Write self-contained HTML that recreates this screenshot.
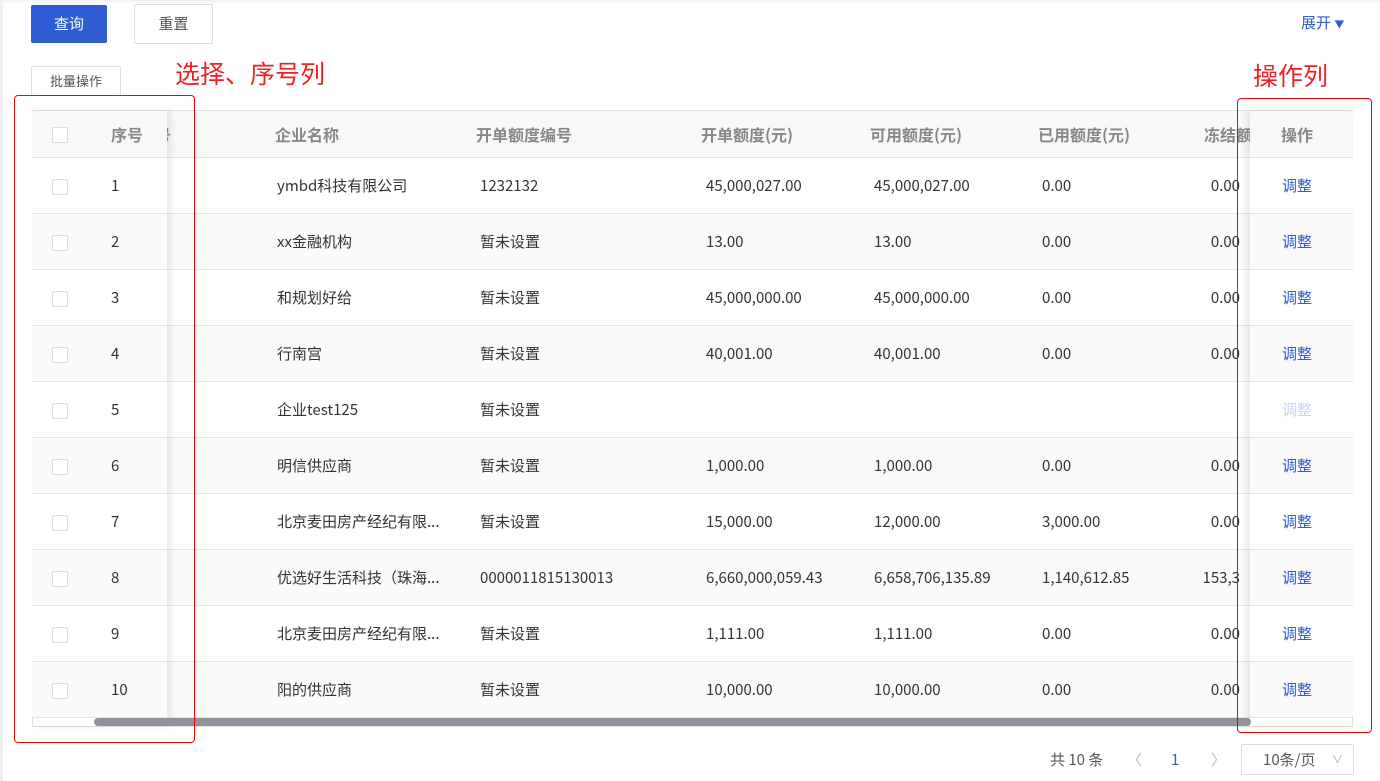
<!DOCTYPE html>
<html><head><meta charset="utf-8"><style>
*{margin:0;padding:0;box-sizing:border-box}
body{width:1380px;height:781px;background:#fff;font-family:"Noto Sans CJK SC","Liberation Sans",sans-serif;font-size:15px;color:#333;position:relative;overflow:hidden}
.a{position:absolute;white-space:nowrap;line-height:20px}
.btn{position:absolute;border:1px solid #dcdcdc;border-radius:2px;background:#fff;text-align:center;color:#555}
.row{position:absolute;left:32px;width:1321px;height:56px;border-bottom:1px solid #e5e5e5}
.cb{position:absolute;width:16px;height:16px;border:1px solid #dcdcdc;border-radius:2px;background:#fff}
.hd{color:#888;font-weight:bold;font-size:16px}
.red{border:1px solid #f00;border-radius:4px;position:absolute}
</style></head><body>
<div class="a" style="left:0;top:0;width:1380px;height:4px;background:linear-gradient(#f0f0f0,#fff)"></div>
<div class="a" style="left:0;top:0;width:3px;height:781px;background:#eee"></div>
<div class="btn" style="left:31px;top:5px;width:76px;height:38px;background:#2f5bd3;border-color:#2f5bd3;color:#fff;line-height:36px;font-size:15px">查询</div>
<div class="btn" style="left:134px;top:4px;width:79px;height:40px;line-height:38px;font-size:15px">重置</div>
<div class="a" style="left:1301px;top:13px;color:#2f5bd3;font-size:15px">展开 <span style="font-size:10px">▼</span></div>
<div class="btn" style="left:31px;top:66px;width:90px;height:30px;line-height:28px;font-size:13px">批量操作</div>
<div class="a" style="left:175px;top:58px;color:#f02020;font-size:25px;line-height:30px">选择、序号列</div>
<div class="a" style="left:1253px;top:60px;color:#f02020;font-size:25px;line-height:30px">操作列</div>

<div class="a" style="left:32px;top:110px;width:1321px;height:617px;border:1px solid #e0e0e0"></div>
<div class="row" style="top:110px;height:48px;background:#f8f8f8;border-top:1px solid #e0e0e0"></div>
<div class="a hd" style="left:155px;top:124px">号</div>
<div class="a hd" style="left:275px;top:124px">企业名称</div>
<div class="a hd" style="left:476px;top:124px">开单额度编号</div>
<div class="a hd" style="left:701px;top:124px">开单额度(元)</div>
<div class="a hd" style="left:870px;top:124px">可用额度(元)</div>
<div class="a hd" style="left:1038px;top:124px">已用额度(元)</div>
<div class="a hd" style="left:1204px;top:124px">冻结额</div>

<div id="rows"></div>
<script>
var d=[["ymbd科技有限公司","1232132","45,000,027.00","45,000,027.00","0.00","0.00"],
["xx金融机构","暂未设置","13.00","13.00","0.00","0.00"],
["和规划好给","暂未设置","45,000,000.00","45,000,000.00","0.00","0.00"],
["行南宫","暂未设置","40,001.00","40,001.00","0.00","0.00"],
["企业test125","暂未设置","","","",""],
["明信供应商","暂未设置","1,000.00","1,000.00","0.00","0.00"],
["北京麦田房产经纪有限...","暂未设置","15,000.00","12,000.00","3,000.00","0.00"],
["优选好生活科技（珠海...","0000011815130013","6,660,000,059.43","6,658,706,135.89","1,140,612.85","153,3"],
["北京麦田房产经纪有限...","暂未设置","1,111.00","1,111.00","0.00","0.00"],
["阳的供应商","暂未设置","10,000.00","10,000.00","0.00","0.00"]];
var h='';
d.forEach(function(r,i){var t=158+i*56,bg=i%2?'#fafafa':'#fff',ty=t+18;
h+='<div class="row" style="top:'+t+'px;background:'+bg+'"></div>';
h+='<div class="a" style="left:277px;top:'+ty+'px">'+r[0]+'</div>';
h+='<div class="a" style="left:480px;top:'+ty+'px">'+r[1]+'</div>';
h+='<div class="a" style="left:706px;top:'+ty+'px">'+r[2]+'</div>';
h+='<div class="a" style="left:874px;top:'+ty+'px">'+r[3]+'</div>';
h+='<div class="a" style="left:1042px;top:'+ty+'px">'+r[4]+'</div>';
h+='<div class="a" style="left:1140px;width:100px;text-align:right;top:'+ty+'px">'+r[5]+'</div>';
});
h+='<div class="a" style="left:33px;top:111px;width:134px;height:615px;box-shadow:4px 0 6px rgba(0,0,0,0.08)"></div>';
h+='<div class="a" style="left:33px;top:111px;width:134px;height:47px;background:#f8f8f8;border-bottom:1px solid #e5e5e5"></div>';
h+='<div class="cb" style="left:52px;top:127px"></div><div class="a hd" style="left:111px;top:124px">序号</div>';
d.forEach(function(r,i){var t=158+i*56,bg=i%2?'#fafafa':'#fff';
h+='<div class="a" style="left:33px;top:'+t+'px;width:134px;height:55px;background:'+bg+'"></div>';
h+='<div class="cb" style="left:52px;top:'+(t+21)+'px"></div>';
h+='<div class="a" style="left:111px;top:'+(t+18)+'px">'+(i+1)+'</div>';});
h+='<div class="a" style="left:1250px;top:111px;width:102px;height:615px;box-shadow:-4px 0 6px rgba(0,0,0,0.08)"></div>';
h+='<div class="a" style="left:1250px;top:111px;width:102px;height:47px;background:#f8f8f8;border-bottom:1px solid #e5e5e5"></div>';
h+='<div class="a hd" style="left:1281px;top:124px">操作</div>';
d.forEach(function(r,i){var t=158+i*56,bg=i%2?'#fafafa':'#fff';
h+='<div class="a" style="left:1250px;top:'+t+'px;width:102px;height:55px;background:'+bg+'"></div>';
h+='<div class="a" style="left:1282px;top:'+(t+18)+'px;color:'+(i==4?'#c8d4f4':'#2f5bd3')+'">调整</div>';});
document.getElementById('rows').outerHTML=h;
</script>
<div class="a" style="left:94px;top:718px;width:1157px;height:8px;background:#909399;border-radius:4px"></div>
<div class="red" style="left:14px;top:95px;width:181px;height:648px"></div>
<div class="red" style="left:1237px;top:98px;width:135px;height:635px"></div>

<div class="a" style="left:1050px;top:750px;color:#555">共 10 条</div>
<div class="a" style="left:1127px;top:750px;color:#bbb">〈</div>
<div class="a" style="left:1171px;top:750px;color:#2f5bd3">1</div>
<div class="a" style="left:1211px;top:750px;color:#bbb">〉</div>
<div class="btn" style="left:1241px;top:744px;width:113px;height:31px;line-height:29px;text-align:left;padding-left:21px;color:#555">10条/页<span style="position:absolute;right:10px;color:#aaa;font-size:11px">∨</span></div>
</body></html>
